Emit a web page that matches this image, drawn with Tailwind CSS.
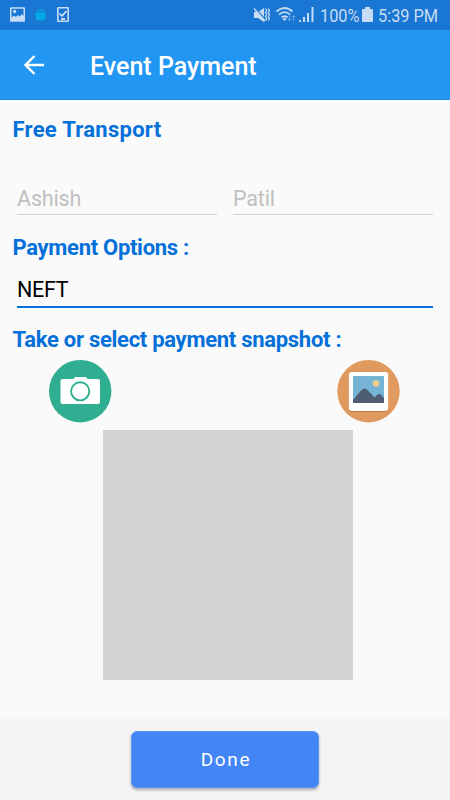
<!DOCTYPE html>
<html lang="en">
<head>
<meta charset="utf-8">
<title>Event Payment</title>
<script src="https://cdn.jsdelivr.net/npm/@tailwindcss/browser@4"></script>
</head>
<body class="w-[450px] h-[800px] overflow-hidden bg-[#fafafa] font-['Roboto',sans-serif] flex flex-col">
<div class="h-[30px] shrink-0 bg-[#1976d2] flex items-center text-[#c6dcf4]">
  <svg class="ml-[10px] w-4 h-4 shrink-0" viewBox="0 0 16 16"><path fill="#c6dcf4" fill-rule="evenodd" d="M1 .3h13q1 0 1 1v12.400q0 1-1 1H1q-1 0-1-1V1.300q0-1 1-1zM1.500 1.800v9L4 8.500l2 1.500 2-2 2 1.500L12 7l1.500 2V1.800zM3 4.500a1.700 1.700 0 1 0 3.400 0a1.700 1.700 0 1 0-3.400 0z"/></svg>
  <svg class="ml-[9px] w-[11px] h-3 shrink-0" viewBox="0 0 11 12"><path d="M0 3.500h11l-.8 6.500q-.3 1.500-2 1.500H3Q1.300 11.500 1 10z" fill="#03a9e5"/><path d="M3 4.500V2q0-1.300 1.300-1.300h2.400Q8 .7 8 2v2.500" fill="none" stroke="#03a9e5" stroke-width="1.200"/></svg>
  <svg class="ml-[11px] -mt-px w-3 h-[15px] shrink-0" viewBox="0 0 12 15"><rect x=".8" y=".8" width="10.400" height="13.400" rx=".5" fill="none" stroke="#c6dcf4" stroke-width="1.600"/><path d="M2.500 6.500 5 9l4.500-5" fill="none" stroke="#e3effc" stroke-width="1.500"/><path d="M4 11h4v2H4z" fill="#c6dcf4"/></svg>
  <svg class="ml-[184px] w-[17px] h-4 shrink-0" viewBox="0 0 17 16"><path d="M1 5h4l6-4v14l-6-4H1z" fill="#c6dcf4"/><path d="m12.500 1.500 1.200 2-1.200 2 1.200 2-1.200 2 1.200 2-1.200 2M15.300 1.500l1.200 2-1.200 2 1.200 2-1.200 2 1.200 2-1.200 2" fill="none" stroke="#c6dcf4" stroke-width="1.300"/><path d="m2 1 10 11" stroke="#1976d2" stroke-width="1.300"/><path d="m1 1.500 11 12.500" stroke="#c6dcf4" stroke-width="1.500"/></svg>
  <svg class="ml-[6px] -mt-px w-5 h-[15px] shrink-0" viewBox="0 0 20 15"><g fill="none" stroke="#c6dcf4" stroke-width="1.700"><path d="M.5 4.500q8-7 16 0M3 7.700q5.500-5 11 0M5.600 10.500q3-2.600 6 0"/></g><path d="m6.500 12 2-1.500 2 1.500-2 2z" fill="#c6dcf4"/><path d="M13.500 8.500v5m-1.700-1.700 1.700 1.700 1.700-1.700M17.500 13.500v-5m-1.700 1.700 1.700-1.700 1.700 1.700" stroke="#6ca7e3" fill="none"/></svg>
  <svg class="ml-[3px] -mt-px w-[15px] h-[15px] shrink-0" viewBox="0 0 15 15"><path d="M0 13h2v2H0zM4 10h2v5H4zM8 6h2v9H8zM12.500 0h2v15h-2z" fill="#c6dcf4"/></svg>
  <div class="ml-[6px] mt-[2px] w-[40px] shrink-0"><span class="inline-block origin-left scale-x-[.86] whitespace-nowrap text-[19px] leading-[30px]">100%</span></div>
  <svg class="ml-[2px] -mt-px w-[11px] h-[15px] shrink-0" viewBox="0 0 11 15"><path d="M3 0h5v2h2q1 0 1 1v11q0 1-1 1H1q-1 0-1-1V3q0-1 1-1h2z" fill="#c6dcf4"/></svg>
  <div class="ml-[5px] mt-[2px] shrink-0"><span class="inline-block origin-left scale-x-[.86] whitespace-nowrap text-[19px] leading-[30px]">5:39 PM</span></div>
</div>
<header class="h-[70px] shrink-0 bg-[#2196f3] border-b border-[#168be5] flex items-center text-white">
  <svg class="ml-6 w-5 h-5" viewBox="0 0 20 20" fill="none" stroke="white" stroke-width="2.400"><path d="M20 10H2M10.500 1 1.500 10l9 9"/></svg>
  <h1 class="ml-[46px] mt-[5px] text-[25px] leading-[30px] font-medium whitespace-nowrap">Event Payment</h1>
</header>
<main class="h-[619px] shrink-0 pl-[12.500px] text-[#0470d9]">
  <h2 class="pt-[15px] text-[22px] leading-[30px] tracking-[.27px] font-bold">Free Transport</h2>
  <div class="mt-[36px] ml-[4.500px] flex gap-4 text-[21.500px] leading-[32px] tracking-[-.15px] text-[#c0c0c0]">
    <div class="w-[200px] h-[34px] pt-[2px] border-b border-[#d3d3d3]">Ashish</div>
    <div class="w-[200px] h-[34px] pt-[2px] border-b border-[#d3d3d3]">Patil</div>
  </div>
  <h2 class="mt-[18px] text-[22px] leading-[30px] tracking-[-.3px] font-bold">Payment Options :</h2>
  <div class="mt-[10px] ml-[4.500px] w-[416px] h-[35px] border-b-2 border-[#0470d9] text-[21.500px] leading-[34px] tracking-[-.3px] text-black">NEFT</div>
  <h2 class="mt-[17px] text-[22px] leading-[30px] tracking-[-.28px] font-bold whitespace-nowrap">Take or select payment snapshot :</h2>
  <div class="mt-[5px] ml-[36px] w-[351px] flex justify-between">
    <svg class="w-[63px] h-[63px]" viewBox="0 0 63 63"><circle cx="31.200" cy="31.200" r="31.200" fill="#30ae91"/><path d="M13.500 19H24.500l1.500-2h11l1.500 2H49q2 0 2 2v21q0 2-2 2H13.500q-2 0-2-2V21q0-2 2-2z" fill="white"/><circle cx="31.200" cy="31.300" r="9.100" fill="white" stroke="#30ae91" stroke-width="1.900"/></svg>
    <svg class="w-[63px] h-[63px]" viewBox="0 0 63 63"><circle cx="31.500" cy="31.200" r="31.200" fill="#e0995e"/><rect x="11.800" y="13.500" width="39.400" height="38.500" rx="3" fill="#b87c4a"/><rect x="11.800" y="12" width="39.400" height="39" rx="3" fill="white"/><path d="M16 16h31v27H16z" fill="#77b3d4"/><circle cx="39" cy="23.500" r="3.200" fill="#f5cf87"/><path d="M16 40 24 30.500q3.500-4 7 0l6.500 7 2.500-2.500q2-2 4 0l3 3v5H16z" fill="#4f5d73"/></svg>
  </div>
  <div class="mt-[7px] ml-[90px] w-[250px] h-[250px] bg-[#d3d3d3]"></div>
</main>
<footer class="flex-1 bg-[#f4f4f4] flex justify-center items-start pt-[12px]">
  <button class="w-[188px] h-[57px] rounded-[6px] bg-[#4285f4] border border-[#5b95f5] text-white text-[19px] tracking-[1.700px] shadow-[0_2px_3px_rgba(0,0,0,.3)] pl-[2px] pt-[2px]">Done</button>
</footer>
</body>
</html>
